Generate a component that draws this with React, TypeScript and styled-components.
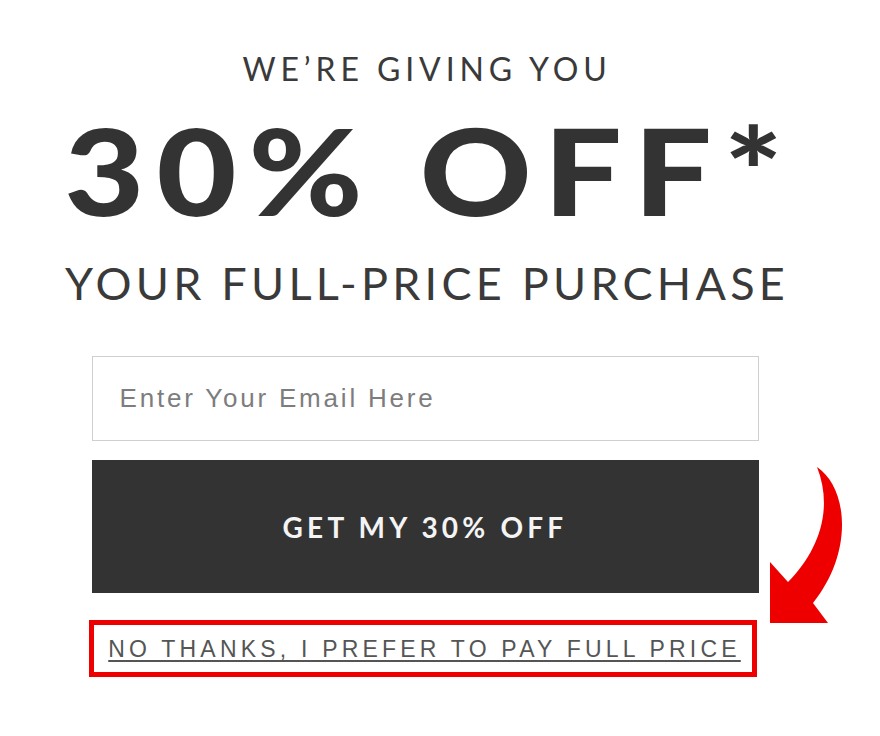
import React from "react";
import styled, { createGlobalStyle } from "styled-components";

const Global = createGlobalStyle`
  html, body { margin: 0; padding: 0; background: #ffffff; }
  body { font-family: "Lato", "Liberation Sans", sans-serif; }
`;

const Page = styled.div`
  width: 880px;
  height: 736px;
  display: flex;
  flex-direction: column;
  align-items: center;
  padding: 52px 30px 0 0;
  box-sizing: border-box;
  color: #333333;
`;

const Kicker = styled.div`
  font-family: "Lato", sans-serif;
  font-weight: 400;
  font-size: 32px;
  line-height: 34px;
  letter-spacing: 4.9px;
  color: #3a3a3a;
  margin-right: -4px;
`;

const Big = styled.div`
  font-family: "Lato", sans-serif;
  font-weight: 900;
  font-size: 120px;
  line-height: 120px;
  letter-spacing: 10.5px;
  color: #333333;
  margin-top: 24px;
  margin-right: -10px;
  transform: scaleX(1.15);
`;

const Sub = styled.div`
  font-family: "Lato", sans-serif;
  font-weight: 400;
  font-size: 45px;
  line-height: 48px;
  letter-spacing: 4.25px;
  color: #3a3a3a;
  margin-top: 29px;
  margin-right: -4px;
`;

const Form = styled.div`
  position: relative;
  width: 667px;
  margin-top: 49px;
  display: flex;
  flex-direction: column;
`;

const EmailInput = styled.input`
  box-sizing: border-box;
  width: 100%;
  height: 85px;
  border: 1px solid #cfcfcf;
  background: #ffffff;
  padding: 0 0 0 27px;
  font-family: "Liberation Sans", Arial, sans-serif;
  font-size: 26px;
  letter-spacing: 2.8px;
  color: #555;
  outline: none;
  &::placeholder { color: #7d7d7d; }
`;

const Submit = styled.button`
  margin-top: 19px;
  width: 100%;
  height: 133px;
  border: none;
  background: #333333;
  color: #f4f4f4;
  font-family: "Lato", sans-serif;
  font-weight: 700;
  font-size: 28px;
  letter-spacing: 4.2px;
  padding: 0 0 0 0;
  cursor: pointer;
`;

const DeclineBox = styled.div`
  margin-top: 27px;
  margin-left: -3px;
  width: 668px;
  height: 57px;
  box-sizing: border-box;
  border: 5px solid #ee0000;
  display: flex;
  align-items: center;
  justify-content: center;
`;

const DeclineLink = styled.a`
  font-family: "Liberation Sans", Arial, sans-serif;
  font-size: 23px;
  letter-spacing: 4.2px;
  margin-right: -4px;
  color: #555555;
  text-decoration: underline;
  text-underline-offset: 3px;
  text-decoration-thickness: 2px;
  margin-top: 1px;
  cursor: pointer;
`;

const Arrow = styled.svg`
  position: absolute;
  left: 668px;
  top: 104px;
  width: 90px;
  height: 170px;
`;

export default function App() {
  return (
    <>
      <Global />
      <Page>
        <Kicker>WE’RE GIVING YOU</Kicker>
        <Big>30% OFF*</Big>
        <Sub>YOUR FULL-PRICE PURCHASE</Sub>
        <Form>
          <EmailInput placeholder="Enter Your Email Here" />
          <Submit>GET MY 30% OFF</Submit>
          <DeclineBox>
            <DeclineLink>NO THANKS, I PREFER TO PAY FULL PRICE</DeclineLink>
          </DeclineBox>
          <Arrow viewBox="0 0 90 170">
            <path
              d="M57 7 C 88 28, 94 92, 53 143 L 68 163 L 10 163 L 10 102 L 28 122 C 58 92, 74 50, 57 7 Z"
              fill="#ee0000"
            />
          </Arrow>
        </Form>
      </Page>
    </>
  );
}
